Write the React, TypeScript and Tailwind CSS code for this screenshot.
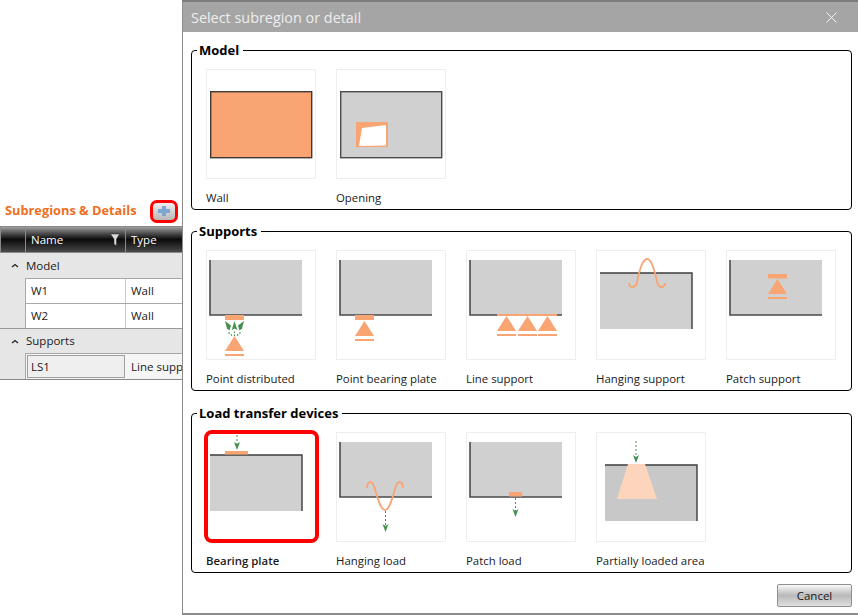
import type { ReactNode } from "react";

const ORANGE = "#f9a473";
const GREEN = "#43904f";

// grey panel with the dark edges on two sides
const Wall = ({ x = 3, y = 9, w = 92, h = 55, edges, fill = "#d0d0d0" }: { x?: number; y?: number; w?: number; h?: number; edges: "lb" | "tr"; fill?: string }) => (
  <>
    <rect x={x} y={y} width={w} height={h} fill={fill} />
    {edges === "lb" ? (
      <path d={`M${x} ${y}V${y + h}H${x + w}`} fill="none" stroke="#4a4a4a" strokeWidth="1.6" />
    ) : (
      <path d={`M${x} ${y}H${x + w}V${y + h}`} fill="none" stroke="#3c3c3c" strokeWidth="1.4" />
    )}
  </>
);

const Arrow = ({ x, y1, y2 }: { x: number; y1: number; y2: number }) => (
  <>
    <line x1={x} y1={y1} x2={x} y2={y2 - 6} stroke={GREEN} strokeWidth="1" strokeDasharray="2 2" />
    <path d={`M${x} ${y2}L${x - 3} ${y2 - 8}L${x} ${y2 - 6}L${x + 3} ${y2 - 8}Z`} fill={GREEN} />
  </>
);

const Support = ({ x, top, w = 19 }: { x: number; top: number; w?: number }) => (
  <>
    <path d={`M${x + w / 2} ${top}L${x + w} ${top + 15}H${x}Z`} fill={ORANGE} />
    <rect x={x} y={top + 18} width={w} height="2" fill={ORANGE} />
  </>
);

const icons: Record<string, ReactNode> = {
  wall: <rect x="3.7" y="21.7" width="101" height="66" fill={ORANGE} stroke="#3f3a36" strokeWidth="1.4" />,
  opening: (
    <>
      <rect x="3.7" y="21.7" width="101" height="66" fill="#d0d0d0" stroke="#4a4a4a" strokeWidth="1.4" />
      <rect x="19" y="52" width="32" height="25" fill={ORANGE} />
      <path d="M22 76L25 58L49 55V75.5Z" fill="#fff" />
    </>
  ),
  pointDistributed: (
    <>
      <Wall edges="lb" />
      <rect x="18" y="64" width="19" height="5" fill={ORANGE} />
      <path d="M18 70L24 74.5L22.5 79.5L20 77.5Z" fill={GREEN} />
      <path d="M27.5 70L30.3 79L27.5 77.5L24.7 79Z" fill={GREEN} />
      <path d="M37 70L31 74.5L32.5 79.5L35 77.5Z" fill={GREEN} />
      <path d="M21.5 81.5L25 84.5M27.5 80.5V85M33.5 81.5L30 84.5" stroke={GREEN} strokeWidth="1.2" strokeDasharray="1.5 1.5" fill="none" />
      <Support x={18} top={85} />
    </>
  ),
  pointPlate: (
    <>
      <Wall edges="lb" />
      <rect x="18" y="64" width="19" height="5" fill={ORANGE} />
      <Support x={18} top={70} />
    </>
  ),
  line: (
    <>
      <Wall edges="lb" />
      <rect x="30" y="63" width="60" height="2" fill={ORANGE} />
      <Support x={30} top={65} />
      <Support x={51} top={65} />
      <Support x={71} top={65} />
    </>
  ),
  hanging: (
    <>
      <Wall y={22} h={56} edges="tr" />
      <path d="M32 32C32 38 39 37 40 31C42 21 45 8 50 8C55 8 58 21 60 31C61 37 68 38 68 32" fill="none" stroke={ORANGE} strokeWidth="1.8" />
    </>
  ),
  patch: (
    <>
      <Wall edges="lb" />
      <rect x="41" y="23" width="19" height="4.5" fill={ORANGE} />
      <Support x={41} top={28} />
    </>
  ),
  bearing: (
    <>
      <Wall y={22} h={56} edges="tr" />
      <rect x="18" y="18" width="23" height="3.5" fill={ORANGE} />
      <Arrow x={30} y1={2} y2={17} />
    </>
  ),
  hangingLoad: (
    <>
      <Wall edges="lb" />
      <path d="M30 55C30 48 35 47 37 53C40 62 43 77 48 77C53 77 56 62 59 53C61 47 66 48 66 55" fill="none" stroke={ORANGE} strokeWidth="1.8" />
      <Arrow x={48.5} y1={78} y2={99} />
    </>
  ),
  patchLoad: (
    <>
      <Wall edges="lb" />
      <rect x="42" y="59" width="13" height="4.5" fill={ORANGE} />
      <Arrow x={48.5} y1={65} y2={84} />
    </>
  ),
  partial: (
    <>
      <Wall x={8} y={32} h={56} edges="tr" fill="#c8c8c8" />
      <path d="M31 31H48L60 66H20Z" fill="#fdd5bd" />
      <Arrow x={39} y1={8} y2={30} />
    </>
  ),
};

type Item = { label: string; icon: string; active?: boolean };

const groups: { title: string; items: Item[] }[] = [
  {
    title: "Model",
    items: [
      { label: "Wall", icon: "wall" },
      { label: "Opening", icon: "opening" },
    ],
  },
  {
    title: "Supports",
    items: [
      { label: "Point distributed", icon: "pointDistributed" },
      { label: "Point bearing plate", icon: "pointPlate" },
      { label: "Line support", icon: "line" },
      { label: "Hanging support", icon: "hanging" },
      { label: "Patch support", icon: "patch" },
    ],
  },
  {
    title: "Load transfer devices",
    items: [
      { label: "Bearing plate", icon: "bearing", active: true },
      { label: "Hanging load", icon: "hangingLoad" },
      { label: "Patch load", icon: "patchLoad" },
      { label: "Partially loaded area", icon: "partial" },
    ],
  },
];

const Card = ({ item }: { item: Item }) => (
  <div className="w-[110px] flex flex-col">
    <div className="relative h-[110px] border border-[#eeeeee]">
      <svg width="108" height="108" viewBox="0 0 108 108">
        {icons[item.icon]}
      </svg>
      {item.active && <div className="absolute top-[-3px] left-[-3px] w-[115px] h-[113px] border-4 border-[#ff0000] rounded-[8px]" />}
    </div>
    <div className={`h-[29px] pt-[10px] leading-[18px] text-[11.4px] whitespace-nowrap text-[#1a1a1a] ${item.active ? "font-semibold" : ""}`}>{item.label}</div>
  </div>
);

const Chevron = () => (
  <svg width="8" height="5" viewBox="0 0 8 5" className="ml-[11px] mr-[7px]">
    <path d="M1 4L4 1.5L7 4" fill="none" stroke="#222" strokeWidth="1.3" />
  </svg>
);

const Row = ({ name, type }: { name: string; type: string }) => (
  <div className="flex h-[25px] ml-[25px] bg-white border-t border-t-[#a8a8a8] border-l border-l-[#a8a8a8] items-stretch">
    <div className="w-[100px] pl-[5px] flex items-center border-r border-r-[#cccccc] shrink-0">{name}</div>
    <div className="flex-1 pl-[5px] flex items-center">{type}</div>
  </div>
);

export default function App() {
  return (
    <div className="flex h-[615px] w-[858px] overflow-hidden bg-white" style={{ fontFamily: '"Open Sans", "Noto Sans", sans-serif' }}>
      <aside className="w-[182px] shrink-0 pt-[199px] text-[11.5px] text-[#1a1a1a]">
        <div className="flex items-center justify-between h-[24px] pl-[5px] pr-[4px]">
          <span className="text-[12.8px] font-bold text-[#ee6f22]">Subregions &amp; Details</span>
          <div className="w-[28px] h-[23px] border-[3px] border-[#ff0000] rounded-[7px] bg-gradient-to-b from-[#f0f0f0] to-[#b8b8b8] flex items-center justify-center">
            <svg width="14" height="12" viewBox="0 0 14 12">
              <path d="M5 1H9V4H13V8H9V11H5V8H1V4H5Z" fill="#7ea6d0" />
            </svg>
          </div>
        </div>
        <div className="mt-[3px] flex h-[27px] bg-gradient-to-b from-[#a0a0a0] via-[#0c0c0c] to-[#4a4a4a] text-white border-y border-[#8a8a8a]">
          <div className="w-[26px] border-x border-[#8a8a8a]" />
          <div className="w-[100px] pl-[5px] flex items-center justify-between pr-[5px] border-r border-[#8a8a8a]">
            <span>Name</span>
            <svg width="10" height="14" viewBox="0 0 10 14">
              <path d="M0.5 1H9.5L6.5 6V13L4 11V6Z" fill="#dcdcdc" stroke="#222" strokeWidth="0.5" />
            </svg>
          </div>
          <div className="flex-1 pl-[5px] flex items-center">Type</div>
        </div>
        <div className="border-b border-[#888888]">
          <div className="bg-[#e6e6e6]">
            <div className="flex items-center h-[25px]">
              <Chevron />
              Model
            </div>
            <Row name="W1" type="Wall" />
            <Row name="W2" type="Wall" />
          </div>
          <div className="bg-[#e6e6e6] border-t border-[#999999]">
            <div className="flex items-center h-[24px]">
              <Chevron />
              Supports
            </div>
            <div className="flex h-[26px] ml-[25px] bg-[#f5f5f5] border-t border-l border-[#a8a8a8] overflow-hidden whitespace-nowrap">
              <div className="w-[98px] my-[1px] ml-[1px] pl-[3px] flex items-center border border-[#a0a0a0] bg-[#efefef] shrink-0">LS1</div>
              <div className="flex-1 pl-[6px] flex items-center">Line support</div>
            </div>
          </div>
        </div>
      </aside>

      <main className="flex-1 h-[615px] flex flex-col border-l border-l-[#8c8c8c] border-t-2 border-t-[#7d7d7d] border-b-2 border-b-[#8c8c8c]">
        <header className="h-[30px] shrink-0 bg-[#a5a5a5] flex items-center justify-between pl-[8px] pr-[21px]">
          <span className="text-[14.4px] text-[#eeeeee] translate-y-px">Select subregion or detail</span>
          <svg width="11" height="11" viewBox="0 0 11 11">
            <path d="M0.5 0.5L10.5 10.5M10.5 0.5L0.5 10.5" stroke="#f2f2f2" strokeWidth="1" />
          </svg>
        </header>
        <div className="flex-1 flex flex-col pl-[8px] pr-[6px] pt-[8px] gap-[11px]">
          {groups.map((g) => (
            <fieldset key={g.title} className="border border-black rounded-[4px] px-[14px] pt-[9px] h-[170px] nth-3:mt-px">
              <legend className="ml-[-9px] pl-[2px] pr-[4px] text-[13px] leading-[20px] font-bold text-black">{g.title}</legend>
              <div className="flex gap-[20px]">
                {g.items.map((it) => (
                  <Card key={it.label} item={it} />
                ))}
              </div>
            </fieldset>
          ))}
          <div className="flex justify-end">
            <button type="button" className="w-[75px] h-[23px] border border-[#8f8f8f] rounded-[2px] bg-gradient-to-b from-[#fafafa] via-[#b9b9b9] to-[#e0e0e0] text-[11.5px] text-[#1a1a1a]">
              Cancel
            </button>
          </div>
        </div>
      </main>
    </div>
  );
}
